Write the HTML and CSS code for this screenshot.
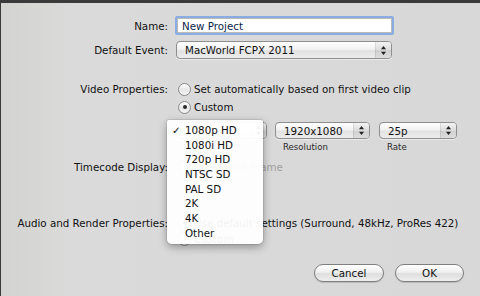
FILE: index.html
```html
<!DOCTYPE html>
<html lang="en">
<head>
    <meta charset="UTF-8">
    <title>New Project</title>
    <link rel="stylesheet" href="styles.css">
</head>
<body>
    <div class="sheet">
        <div class="row row-name">
            <span class="lbl">Name:</span>
            <div class="field">New Project</div>
        </div>

        <div class="row row-event">
            <span class="lbl">Default Event:</span>
            <div class="popup p-event">
                <span class="val">MacWorld FCPX 2011</span>
                <span class="arrows"><svg width="5" height="9" viewBox="0 0 5 9"><path d="M2.5 0L5 3.2H0z M2.5 9L0 5.8H5z" fill="#222"/></svg></span>
            </div>
        </div>

        <div class="row row-video">
            <span class="lbl">Video Properties:</span>
            <div class="radio"><span class="circle"></span>Set automatically based on first video clip</div>
        </div>
        <div class="row row-custom">
            <span class="lbl"></span>
            <div class="radio on"><span class="circle"></span>Custom</div>
        </div>

        <div class="row row-format">
            <span class="lbl"></span>
            <div class="group">
                <div class="popup p-format">
                    <span class="val">1080p HD</span>
                    <span class="arrows"><svg width="5" height="9" viewBox="0 0 5 9"><path d="M2.5 0L5 3.2H0z M2.5 9L0 5.8H5z" fill="#222"/></svg></span>
                </div>
            </div>
            <div class="group">
                <div class="popup p-res">
                    <span class="val">1920x1080</span>
                    <span class="arrows"><svg width="5" height="9" viewBox="0 0 5 9"><path d="M2.5 0L5 3.2H0z M2.5 9L0 5.8H5z" fill="#222"/></svg></span>
                </div>
                <div class="sub">Resolution</div>
            </div>
            <div class="group">
                <div class="popup p-rate">
                    <span class="val">25p</span>
                    <span class="arrows"><svg width="5" height="9" viewBox="0 0 5 9"><path d="M2.5 0L5 3.2H0z M2.5 9L0 5.8H5z" fill="#222"/></svg></span>
                </div>
                <div class="sub">Rate</div>
            </div>
        </div>

        <div class="row row-timecode">
            <span class="lbl">Timecode Display:</span>
            <div class="radio dim"><span class="circle"></span>HH:MM:SS:Frame</div>
        </div>

        <div class="row row-audio">
            <span class="lbl">Audio and Render Properties:</span>
            <div class="radio on"><span class="circle"></span>Use default settings (Surround, 48kHz, ProRes 422)</div>
        </div>
        <div class="row row-custom2">
            <span class="lbl"></span>
            <div class="radio"><span class="circle"></span>Custom</div>
        </div>

        <div class="buttons">
            <button class="btn btn-cancel">Cancel</button>
            <button class="btn btn-ok">OK</button>
        </div>

        <ul class="menu">
            <li class="checked">1080p HD</li>
            <li>1080i HD</li>
            <li>720p HD</li>
            <li>NTSC SD</li>
            <li>PAL SD</li>
            <li>2K</li>
            <li>4K</li>
            <li>Other</li>
        </ul>
    </div>
</body>
</html>
```

FILE: styles.css
```css
body {
    margin: 0;
    width: 480px;
    height: 296px;
    overflow: hidden;
    background-color: #3a3a3a;
    font-family: "DejaVu Sans", Verdana, sans-serif;
    font-size: 10.3px;
    color: #111;
}
.sheet {
    position: relative;
    margin: 3px 0 0 1px;
    height: 293px;
    padding-top: 13px;
    box-sizing: border-box;
    background: linear-gradient(to right, #d3d4d0 0, #dadada 70px, #d8d8d8 100%);
}
.row {
    display: flex;
    align-items: center;
}
.lbl {
    width: 167px;
    flex: none;
    text-align: right;
    white-space: nowrap;
}
.row-name { height: 19px; }
.row-event { height: 18px; margin-top: 6px; }
.row-video { height: 14px; margin-top: 23px; }
.row-custom { height: 14px; margin-top: 4px; }
.row-format { align-items: flex-start; margin-top: 8px; }
.row-timecode { height: 14px; margin-top: 8px; }
.row-audio { height: 14px; margin-top: 42px; }
.row-custom2 { height: 14px; margin-top: 2px; }

.field {
    margin-left: 7px;
    width: 219px;
    height: 19px;
    box-sizing: border-box;
    padding: 0 0 0 5px;
    line-height: 17px;
    background: #fff;
    border: 2px solid #89ade2;
    border-radius: 2px;
    box-shadow: inset 0 0 0 1px #b9b9b9;
    color: #0c1d4a;
}

.popup {
    display: flex;
    align-items: center;
    box-sizing: border-box;
    background: linear-gradient(#ffffff, #f2f2f2 45%, #e2e2e2 55%, #ededed);
    border: 1px solid #8e8e8e;
    border-radius: 4px;
    box-shadow: 0 1px 0 rgba(255, 255, 255, 0.5);
}
.popup .val {
    flex: 1;
    padding-left: 8px;
}
.arrows {
    width: 15px;
    align-self: stretch;
    display: flex;
    align-items: center;
    justify-content: center;
    border-left: 1px solid rgba(0, 0, 0, 0.08);
    background: linear-gradient(#f4f4f4, #dcdcdc 50%, #cfcfcf 52%, #dddddd);
    border-radius: 0 3px 3px 0;
}
.p-event { margin-left: 8px; width: 216px; height: 18px; }
.p-format { margin-left: 8px; width: 91px; height: 17px; }
.p-res { margin-left: 8px; width: 95px; height: 17px; }
.p-rate { margin-left: 9px; width: 78px; height: 17px; }

.sub {
    font-size: 8.6px;
    color: #2a2a2a;
    padding-left: 16px;
    margin-top: 3px;
}
.group:last-child .sub { padding-left: 17px; }

.radio {
    display: flex;
    align-items: center;
    margin-left: 10px;
    white-space: nowrap;
}
.radio .circle {
    width: 11px;
    height: 11px;
    margin-right: 3px;
    border: 1px solid #8a8a8a;
    border-radius: 50%;
    background: linear-gradient(#ffffff, #e6e6e6 55%, #f4f4f4);
    display: flex;
    align-items: center;
    justify-content: center;
    flex: none;
}
.radio.on .circle::after {
    content: "";
    width: 4px;
    height: 4px;
    border-radius: 50%;
    background: #2b2b2b;
}
.radio.dim { color: #a0a0a0; }

.buttons {
    display: flex;
    justify-content: flex-end;
    gap: 11px;
    margin-top: 18px;
    padding-right: 16px;
}
.btn {
    height: 18px;
    padding: 0;
    font-family: inherit;
    font-size: 10.3px;
    color: #111;
    background: linear-gradient(#ffffff, #f0f0f0 45%, #dedede 55%, #eeeeee);
    border: 1px solid #7f7f7f;
    border-radius: 9px;
    box-shadow: 0 1px 1px rgba(0, 0, 0, 0.15);
}
.btn-cancel { width: 70px; }
.btn-ok { width: 69px; }

.menu {
    position: absolute;
    left: 166px;
    top: 117px;
    width: 96px;
    margin: 0;
    padding: 3px 0 3px;
    list-style: none;
    background: rgba(255, 255, 255, 0.95);
    border-radius: 2px 2px 5px 5px;
    box-shadow: 0 3px 8px rgba(0, 0, 0, 0.35), 0 0 0 1px rgba(0, 0, 0, 0.08);
}
.menu li {
    height: 14.7px;
    line-height: 14.7px;
    padding-left: 18px;
    position: relative;
}
.menu li.checked::before {
    content: "\2713";
    position: absolute;
    left: 5px;
}
```
